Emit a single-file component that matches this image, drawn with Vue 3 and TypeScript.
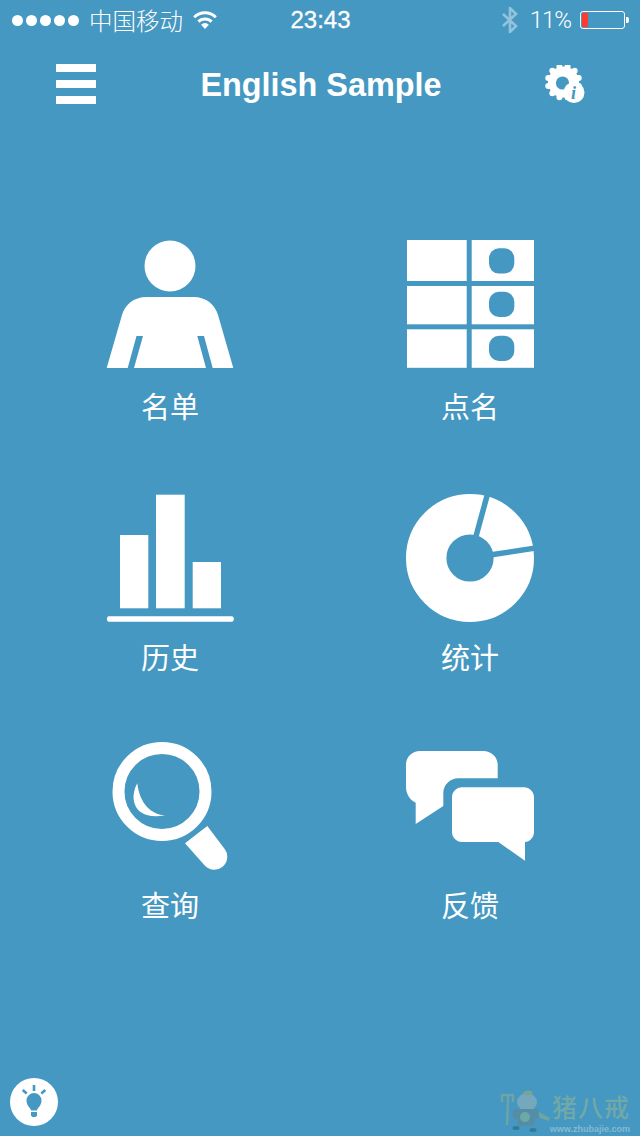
<template>
  <div class="screen">
    <div class="status-bar">
      <div class="status-left">
        <div class="signal">
          <span v-for="n in 5" :key="n" class="signal-dot" />
        </div>
        <span class="carrier">中国移动</span>
        <svg class="wifi" viewBox="0 0 24 18" fill="none" stroke="#fff" stroke-width="3">
          <path d="M1.2 6.2a15.4 15.4 0 0 1 21.6 0" />
          <path d="M5.4 10.6a9.4 9.4 0 0 1 13.2 0" />
          <path d="M12 18l-3.9-4.3a5.4 5.4 0 0 1 7.8 0z" fill="#fff" stroke="none" />
        </svg>
      </div>
      <span class="clock">23:43</span>
      <div class="status-right">
        <svg class="bluetooth" viewBox="0 0 16 26" fill="none" stroke="#fff" stroke-opacity="0.42" stroke-width="2.6">
          <path d="M1 7l13 12-6 6V1l6 6L1 19" />
        </svg>
        <span class="battery-text">11%</span>
        <div class="battery">
          <div class="battery-body">
            <div class="battery-level" />
          </div>
          <div class="battery-nub" />
        </div>
      </div>
    </div>

    <header class="app-header">
      <div class="menu-btn">
        <span /><span /><span />
      </div>
      <h1 class="app-title">English Sample</h1>
      <svg class="settings-icon" viewBox="0 0 42 38">
        <circle cx="19.500" cy="17" r="15.500" fill="#fff" />
        <circle v-for="t in gearTeeth" :key="t.x" :cx="t.x" :cy="t.y" r="3" fill="#fff" />
        <circle cx="18.500" cy="18" r="6.600" fill="#4598c1" />
        <circle cx="30" cy="27.500" r="10.500" fill="#fff" />
        <text x="29.500" y="34" class="info-mark">i</text>
      </svg>
    </header>

    <main class="menu-grid">
      <div class="menu-item">
        <svg class="menu-icon" viewBox="0 0 128 128">
          <circle cx="64" cy="26" r="25.500" fill="#fff" />
          <path fill="#fff" d="M.7 128 16 75C19 65 27 57 41 57h46c14 0 22 8 25 18l15.300 53h-20.600L98 96h-6.700l8.700 32H28l9-32h-6.500l-8.800 32z" />
        </svg>
        <span class="menu-label label-low">名单</span>
      </div>

      <div class="menu-item">
        <svg class="menu-icon" viewBox="0 0 128 128" fill="#fff">
          <rect x="1" y="0" width="59.700" height="41" />
          <rect x="65.700" y="0" width="62.300" height="41" />
          <rect x="1" y="46" width="59.700" height="38.300" />
          <rect x="65.700" y="46" width="62.300" height="38.300" />
          <rect x="1" y="89.300" width="59.700" height="38.500" />
          <rect x="65.700" y="89.300" width="62.300" height="38.500" />
          <rect x="83" y="8.300" width="25.300" height="25.300" rx="10" fill="#4598c1" />
          <rect x="83" y="51.700" width="25.300" height="25.300" rx="10" fill="#4598c1" />
          <rect x="83" y="95.700" width="25.300" height="25.300" rx="10" fill="#4598c1" />
        </svg>
        <span class="menu-label label-low">点名</span>
      </div>

      <div class="menu-item">
        <svg class="menu-icon" viewBox="0 0 128 128" fill="#fff">
          <rect x="14" y="41" width="28.300" height="73.300" />
          <rect x="50" y="0.700" width="28.700" height="113.600" />
          <rect x="86.700" y="68" width="28.300" height="46.300" />
          <rect x="1" y="122.300" width="126.700" height="5.400" rx="2" />
        </svg>
        <span class="menu-label">历史</span>
      </div>

      <div class="menu-item">
        <svg class="menu-icon" viewBox="0 0 128 128">
          <circle cx="64" cy="64" r="43.800" fill="none" stroke="#fff" stroke-width="40.400" />
          <path d="M69.300 44.700 82.500-3.500M83.800 61 133 53.500" fill="none" stroke="#4598c1" stroke-width="5.500" />
        </svg>
        <span class="menu-label">统计</span>
      </div>

      <div class="menu-item">
        <svg class="menu-icon" viewBox="0 0 128 128" fill="#fff">
          <circle cx="56" cy="49.500" r="43.500" fill="none" stroke="#fff" stroke-width="12" />
          <path d="M79 101.300 101.300 84l17.200 22.700a13 13 0 0 1-20 16.600z" />
          <path d="M31.300 41.300C23 56 27 79 59 73.300 46 73 33.500 62 31.300 41.300z" />
        </svg>
        <span class="menu-label">查询</span>
      </div>

      <div class="menu-item">
        <svg class="menu-icon" viewBox="0 0 128 128" fill="#fff">
          <path d="M14 9h63.300c8 0 14.400 6 14.400 14v13.300H52.300c-8.300 0-15 6.700-15 15V64L9.700 82V60.700C4 58 0 52 0 44.700V23C0 15 6 9 14 9z" />
          <path d="M56 45.300h62c5.500 0 10 4.500 10 10V90c0 5.500-4.500 10-9 10v18.700L92.300 100H56c-5.500 0-10-4.500-10-10V55.300c0-5.500 4.500-10 10-10z" />
        </svg>
        <span class="menu-label">反馈</span>
      </div>
    </main>

    <footer class="app-footer">
      <div class="hint-btn">
        <svg class="hint-icon" viewBox="0 0 48 48" fill="none" stroke="#4598c1">
          <path d="M24 7v6M12.700 12l4 3.500M35.300 12l-4 3.500" stroke-width="2.600" />
          <path d="M21 32.500c0-2.500-4.500-4.500-4.500-10a7.500 7.500 0 0 1 15 0c0 5.500-4.500 7.500-4.500 10z" fill="#4598c1" stroke="none" />
          <path d="M21 34h6v3.500l-1.500 1.500h-3L21 37.500z" fill="#4598c1" stroke="none" />
        </svg>
      </div>

      <div class="watermark">
        <svg class="mascot" viewBox="0 0 52 46" fill="none">
          <path d="M10 13 9 37M3 7h13M4 7v7M10 7v6M15 7v7" stroke="#7ea89c" stroke-width="2.400" />
          <path d="M41 24l11 6-2 3-10-4z" fill="#7ea89c" />
          <ellipse cx="29" cy="14" rx="10" ry="9" fill="#86aebb" />
          <ellipse cx="30" cy="5" rx="4.500" ry="2.500" fill="#8ba68f" />
          <path d="M15 21h25l1 9-4 1-1 7H20l-1-7-4-1z" fill="#5c8a9e" />
          <circle cx="27" cy="29" r="5" fill="#7aae9f" />
          <ellipse cx="18" cy="40" rx="3.500" ry="2" fill="#2f6f93" />
          <ellipse cx="35" cy="42" rx="3.500" ry="2" fill="#2f6f93" />
        </svg>
        <div class="watermark-copy">
          <span class="watermark-name">猪八戒</span>
          <span class="watermark-url">www.zhubajie.com</span>
        </div>
      </div>
    </footer>
  </div>
</template>

<script setup lang="ts">
// bumps round the settings gear
const gearTeeth = Array.from({ length: 12 }, (_, i) => {
  const angle = (i * Math.PI) / 6 + Math.PI / 12
  return { x: 19.5 + 15.8 * Math.cos(angle), y: 17 + 15.8 * Math.sin(angle) }
})
</script>

<style>
body {
  background: #4598c1;
}
</style>

<style scoped>
.screen {
  display: flex;
  flex-direction: column;
  height: 1136px;
  overflow: hidden;
  background: #4598c1;
  color: #fff;
  font-family: "Liberation Sans", "Noto Sans CJK SC", sans-serif;
}

.status-bar {
  display: grid;
  grid-template-columns: 1fr auto 1fr;
  align-items: center;
  height: 40px;
  padding: 0 11px 0 12px;
  box-sizing: border-box;
}

.status-left,
.status-right {
  display: flex;
  align-items: center;
}

.status-right {
  justify-content: flex-end;
}

.signal {
  display: flex;
  gap: 3px;
}

.signal-dot {
  width: 11px;
  height: 11px;
  border-radius: 50%;
  background: #fff;
}

.carrier {
  margin-left: 10px;
  font-family: "Noto Sans CJK SC", sans-serif;
  font-size: 23.500px;
  font-weight: 300;
  line-height: 40px;
}

.wifi {
  width: 24px;
  height: 18px;
  margin-left: 10px;
  margin-top: -1px;
}

.clock {
  font-size: 24px;
  line-height: 40px;
  -webkit-text-stroke: 0.3px #fff;
}

.bluetooth {
  width: 16px;
  height: 26px;
}

.battery-text {
  margin-left: 12px;
  font-family: Roboto, "Liberation Sans", sans-serif;
  font-size: 24px;
  font-weight: 300;
  letter-spacing: -1px;
  line-height: 40px;
}

.battery {
  display: flex;
  align-items: center;
  margin-left: 9px;
}

.battery-body {
  display: flex;
  width: 45px;
  height: 18px;
  padding: 1px;
  box-sizing: border-box;
  border: 1px solid #fff;
  border-radius: 3px;
}

.battery-level {
  width: 5.500px;
  background: #ff3b30;
}

.battery-nub {
  width: 3px;
  height: 6px;
  margin-left: 1px;
  border-radius: 0 2px 2px 0;
  background: #fff;
}

.app-header {
  display: grid;
  grid-template-columns: 1fr auto 1fr;
  align-items: center;
  height: 88px;
  padding: 0 54px 0 56px;
  box-sizing: border-box;
}

.menu-btn {
  display: flex;
  flex-direction: column;
  gap: 8px;
  width: 40px;
}

.menu-btn span {
  height: 8px;
  background: #fff;
}

.app-title {
  margin: 2px 0 0;
  font-size: 32.400px;
  font-weight: 700;
  line-height: 40px;
}

.settings-icon {
  justify-self: end;
  width: 42px;
  height: 38px;
}

.info-mark {
  font-family: "Liberation Serif", serif;
  font-size: 18px;
  font-style: italic;
  font-weight: 700;
  fill: #4598c1;
  text-anchor: middle;
}

.menu-grid {
  display: grid;
  grid-template-columns: 300px 300px;
  grid-template-rows: 254px 248px 200px;
  margin-top: 112px;
  padding-left: 20px;
}

.menu-item {
  display: flex;
  flex-direction: column;
  align-items: center;
}

.menu-icon {
  width: 128px;
  height: 128px;
}

.menu-label {
  margin-top: 14px;
  font-family: "Noto Sans CJK SC", sans-serif;
  font-size: 29px;
  font-weight: 400;
  line-height: 40px;
}

.label-low {
  margin-top: 17px;
}

.app-footer {
  display: flex;
  align-items: flex-end;
  justify-content: space-between;
  margin-top: auto;
  padding: 0 10px 10px;
}

.hint-btn {
  width: 48px;
  height: 48px;
  border-radius: 50%;
  background: #fff;
}

.hint-icon {
  display: block;
  width: 48px;
  height: 48px;
}

.watermark {
  display: flex;
  align-items: flex-end;
  margin-bottom: -8px;
}

.mascot {
  width: 52px;
  height: 46px;
  opacity: 0.75;
}

.watermark-copy {
  display: flex;
  flex-direction: column;
  align-items: flex-end;
  width: 80px;
}

.watermark-name {
  font-family: "Noto Sans CJK SC", sans-serif;
  font-size: 25px;
  font-weight: 500;
  line-height: 28px;
  letter-spacing: 1px;
  color: #72a8a8;
}

.watermark-url {
  margin-top: 4px;
  font-size: 9px;
  font-weight: 700;
  line-height: 10px;
  color: #86b8d3;
}
</style>
